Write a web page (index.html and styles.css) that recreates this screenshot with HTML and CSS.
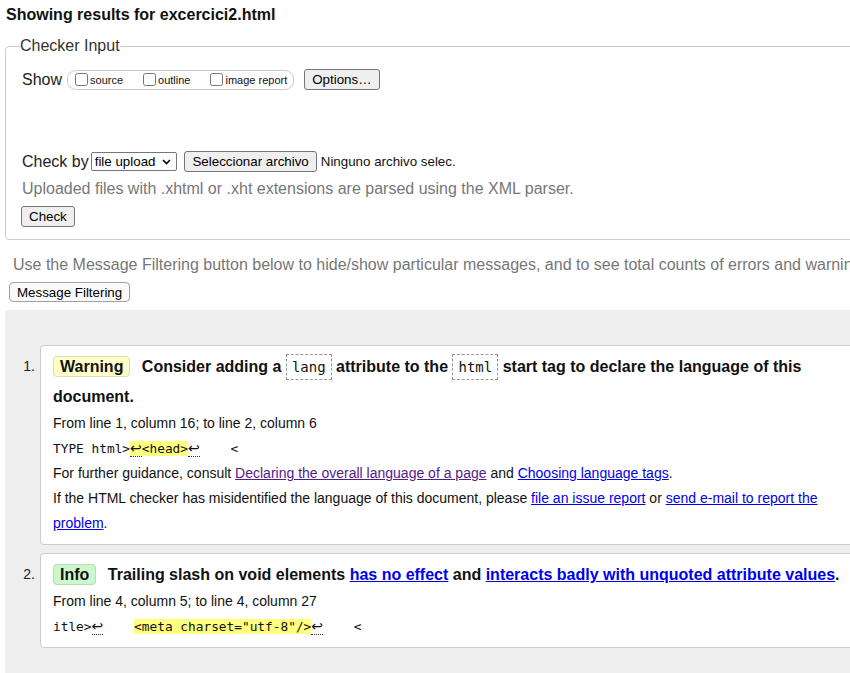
FILE: index.html
```html
<!DOCTYPE html>
<html lang="en">
<head>
<meta charset="utf-8">
<title>Showing results for excercici2.html - Nu Html Checker</title>
<link rel="stylesheet" href="styles.css">
</head>
<body>
<div class="page">
  <h2 class="title">Showing results for excercici2.html</h2>
  <fieldset class="checker">
    <legend>Checker Input</legend>
    <div class="row show-row">
      <span class="lbl">Show</span>
      <span class="opts">
        <label class="opt"><input type="checkbox">source</label>
        <label class="opt"><input type="checkbox">outline</label>
        <label class="opt"><input type="checkbox">image report</label>
      </span>
      <button class="btn options" type="button">Options…</button>
    </div>
    <div class="row checkby-row">
      <span class="lbl">Check by</span>
      <span class="select">file upload<svg class="chev" width="9" height="6" viewBox="0 0 9 6"><path d="M1 1l3.5 3.5L8 1" fill="none" stroke="#000" stroke-width="1.6"/></svg></span>
      <button class="btn file" type="button">Seleccionar archivo</button>
      <span class="nofile">Ninguno archivo selec.</span>
    </div>
    <p class="hint">Uploaded files with .xhtml or .xht extensions are parsed using the XML parser.</p>
    <button class="btn check" type="button">Check</button>
  </fieldset>
  <p class="filter-hint">Use the Message Filtering button below to hide/show particular messages, and to see total counts of errors and warnings.</p>
  <button class="btn filter" type="button">Message Filtering</button>
  <div class="results">
    <ol class="messages">
      <li class="msg">
        <span class="num">1.</span>
        <div class="box">
          <p class="head"><strong class="badge warning">Warning</strong> Consider adding a <code>lang</code> attribute to the <code>html</code> start tag to declare the language of this document.</p>
          <p class="line">From line 1, column 16; to line 2, column 6</p>
          <p class="line"><code class="extract">TYPE html&gt;<mark><span class="lf">↩</span>&lt;head&gt;</mark><span class="lf">↩</span>    &lt;</code></p>
          <p class="line">For further guidance, consult <a class="visited" href="#">Declaring the overall language of a page</a> and <a href="#">Choosing language tags</a>.</p>
          <p class="line">If the HTML checker has misidentified the language of this document, please <a href="#">file an issue report</a> or <a href="#">send e-mail to report the problem</a>.</p>
        </div>
      </li>
      <li class="msg">
        <span class="num">2.</span>
        <div class="box">
          <p class="head"><strong class="badge info">Info</strong> Trailing slash on void elements <a href="#">has no effect</a> and <a href="#">interacts badly with unquoted attribute values</a>.</p>
          <p class="line">From line 4, column 5; to line 4, column 27</p>
          <p class="line"><code class="extract">itle&gt;<span class="lf">↩</span>    <mark>&lt;meta charset="utf-8"/&gt;</mark><span class="lf">↩</span>    &lt;</code></p>
        </div>
      </li>
    </ol>
  </div>
</div>
</body>
</html>
```
FILE: styles.css
```css
html, body {
  margin: 0;
  overflow: hidden;
  background: #fff;
}
body {
  font-family: "Liberation Sans", Arial, sans-serif;
  color: #111;
}
.page {
  width: 876px;
  padding: 6px 5px 0;
}
.title {
  font-size: 16px;
  line-height: 18px;
  font-weight: bold;
  margin: 0 0 13px 1px;
  color: #111;
}
.checker {
  margin: 0;
  min-width: 0;
  border: 1px solid #ccc;
  border-radius: 4px;
  padding: 0 15px 12px;
}
.checker legend {
  padding: 0;
  margin-left: -1px;
  font-size: 16px;
  line-height: 18px;
  color: #333;
}
.row {
  display: flex;
  align-items: center;
}
.show-row {
  margin-top: 14px;
}
.lbl {
  font-size: 16px;
  color: #222;
  padding-left: 1px;
}
.opts {
  display: inline-flex;
  align-items: center;
  height: 18px;
  margin-left: 5px;
  padding: 0 6px 0 7px;
  border: 1px solid #ccc;
  border-radius: 9px;
}
.opt {
  display: inline-flex;
  align-items: center;
  font-size: 11px;
  margin-right: 20px;
  color: #111;
}
.opt:last-child {
  margin-right: 0;
}
.opt input {
  margin: 0 2px 0 0;
  width: 13px;
  height: 13px;
}
.btn {
  font-family: "Liberation Sans", Arial, sans-serif;
  font-size: 13.33px;
  line-height: 15px;
  padding: 2px 7px;
  border: 1px solid #767676;
  border-radius: 3px;
  background: #efefef;
  color: #000;
  margin: 0;
}
.options {
  margin-left: 10px;
}
.checkby-row {
  margin-top: 61px;
}
.select {
  display: inline-flex;
  align-items: center;
  margin-left: 2px;
  height: 17px;
  padding: 0 5px 0 3px;
  border: 1px solid #767676;
  border-radius: 2px;
  font-size: 13.33px;
  color: #000;
  background: #fff;
}
.chev {
  margin-left: 7px;
}
.file {
  margin-left: 7px;
}
.nofile {
  margin-left: 4px;
  font-size: 13.33px;
  color: #111;
}
.hint {
  margin: 8px 0 0 1px;
  font-size: 16px;
  line-height: 18px;
  color: #777;
}
.check {
  margin-top: 8px;
}
.filter-hint {
  margin: 16px 0 0 8px;
  font-size: 16px;
  line-height: 18px;
  color: #777;
  white-space: nowrap;
}
.filter {
  margin: 8px 0 0 4px;
  border-color: #a0a0a0;
  background: #fafafa;
  border-radius: 4px;
  padding: 2px 7px 1px;
}
.results {
  margin-top: 8px;
  background: #eee;
  border-radius: 4px;
  padding: 35px 10px 40px 0;
}
.messages {
  list-style: none;
  margin: 0;
  padding: 0;
}
.msg {
  display: flex;
  align-items: flex-start;
  margin-bottom: 8px;
}
.num {
  width: 30px;
  margin-right: 5px;
  text-align: right;
  font-size: 14px;
  line-height: 29px;
  padding-top: 7px;
  color: #222;
}
.box {
  flex: 1;
  background: #fff;
  border: 1px solid #ccc;
  border-radius: 4px;
  padding: 6px 12px 8px;
}
.head {
  margin: 0;
  font-size: 16px;
  font-weight: bold;
  line-height: 29px;
}
.badge {
  padding: 1px 6px;
  border: 1px solid #ddd;
  border-radius: 4px;
  margin-right: 7px;
}
.warning {
  background: #ffffc8;
  border-color: #dcdcb4;
}
.info {
  background: #ccf7cc;
  border-color: #b8dcb8;
}
.head code {
  font-family: "DejaVu Sans Mono", monospace;
  font-weight: normal;
  font-size: 14px;
  padding: 4px 5px;
  border: 1px dashed #999;
}
.line {
  margin: 0;
  font-size: 14px;
  line-height: 25px;
}
.extract {
  font-family: "DejaVu Sans Mono", monospace;
  font-size: 12.8px;
  white-space: pre;
}
mark {
  background: #ffff80;
  color: inherit;
}
.lf {
  font-family: "DejaVu Sans", sans-serif;
  font-size: 14px;
  border-bottom: 1px dotted #333;
}
a {
  color: #00e;
}
a.visited {
  color: #551a8b;
}
```
